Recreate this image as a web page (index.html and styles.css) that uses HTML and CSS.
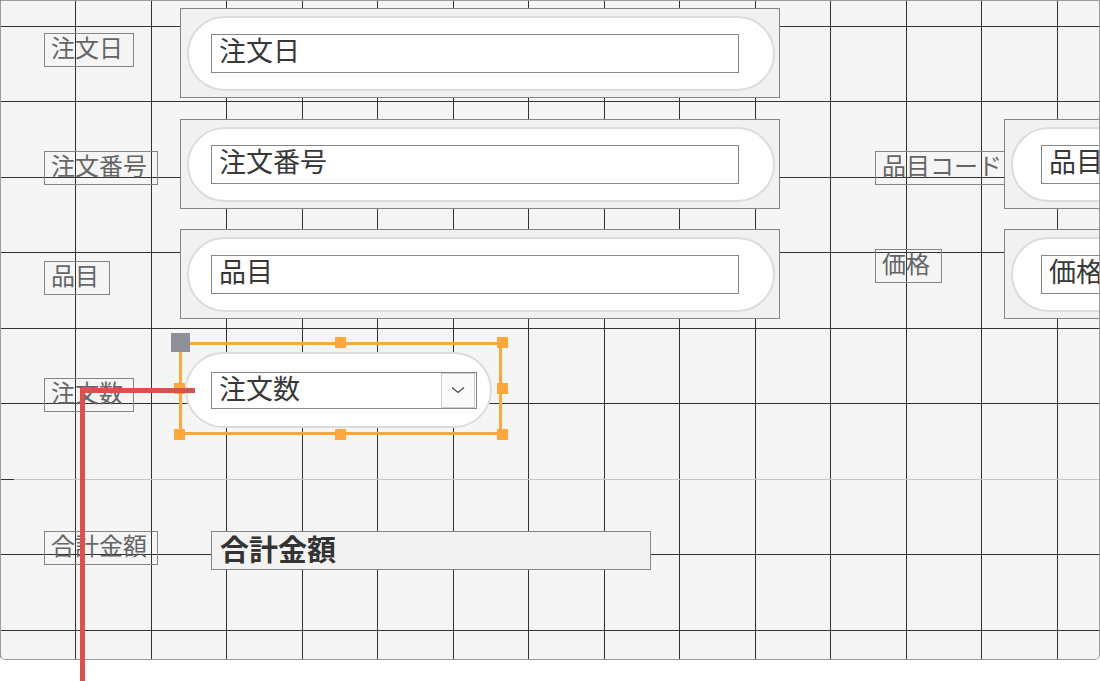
FILE: index.html
```html
<!DOCTYPE html>
<html lang="ja">
<head>
<meta charset="utf-8">
<title>フォーム デザイン</title>
<link rel="stylesheet" href="styles.css">
</head>
<body>
<div class="stage">
  <div class="canvas">
    <div class="section-line"></div>

    <div class="lbl l-date">注文日</div>
    <div class="box c-date"><div class="pill"><div class="field f-wide">注文日</div></div></div>

    <div class="lbl l-no">注文番号</div>
    <div class="box c-no"><div class="pill"><div class="field f-wide">注文番号</div></div></div>

    <div class="lbl l-item">品目</div>
    <div class="box c-item"><div class="pill"><div class="field f-wide">品目</div></div></div>

    <div class="lbl l-code">品目コード</div>
    <div class="box c-code"><div class="pill pill-r"><div class="field f-wide">品目コード</div></div></div>

    <div class="lbl l-price">価格</div>
    <div class="box c-price"><div class="pill pill-r"><div class="field f-wide">価格</div></div></div>

    <div class="lbl l-qty">注文数</div>
    <div class="combo-pill">
      <div class="field combo-field">
        <span class="combo-text">注文数</span>
        <span class="drop">
          <svg width="14" height="8" viewBox="0 0 14 8"><path d="M1 1.5 L7 6.5 L13 1.5" fill="none" stroke="#444" stroke-width="1.2"/></svg>
        </span>
      </div>
    </div>
    <div class="selection">
      <span class="anchor"></span>
      <span class="h h-tm"></span><span class="h h-tr"></span>
      <span class="h h-ml"></span><span class="h h-mr"></span>
      <span class="h h-bl"></span><span class="h h-bm"></span><span class="h h-br"></span>
    </div>

    <div class="lbl l-total">合計金額</div>
    <div class="total">合計金額</div>
  </div>

  <div class="link-h"></div>
  <div class="link-v"></div>
</div>
</body>
</html>
```

FILE: styles.css
```css
html, body {
  margin: 0;
  padding: 0;
  background: #ffffff;
  overflow: hidden;
}

.stage {
  position: relative;
  width: 1100px;
  height: 681px;
  font-family: "Noto Sans CJK JP", "Noto Sans", sans-serif;
}

.canvas {
  position: relative;
  width: 1100px;
  height: 660px;
  background-color: #f5f5f5;
  background-image:
    linear-gradient(to right, #333 0 1px, transparent 1px 76px, #333 76px 77px, transparent 77px),
    linear-gradient(to bottom, #333 0 1px, transparent 1px 75px, #333 75px 76px, transparent 76px);
  background-size: 151px 100%, 100% 151px;
  background-position: 75px 0, 0 26px;
  border-radius: 0 0 5px 5px;
  overflow: hidden;
}

.canvas::after {
  content: "";
  position: absolute;
  inset: 0;
  border: 1px solid #9c9c9c;
  border-radius: 0 0 5px 5px;
  pointer-events: none;
  z-index: 5;
}

.section-line {
  position: absolute;
  left: 14px;
  right: 0;
  top: 479px;
  height: 1px;
  background: #c8c8c8;
}

/* labels */
.lbl {
  position: absolute;
  box-sizing: border-box;
  height: 34px;
  border: 1px solid #858585;
  color: #656565;
  font-size: 24px;
  line-height: 25px;
  padding: 0 0 0 6px;
  white-space: nowrap;
}
.l-date  { left: 44px;  top: 33px;  width: 90px; }
.l-no    { left: 44px;  top: 151px; width: 114px; }
.l-item  { left: 44px;  top: 261px; width: 66px; }
.l-qty   { left: 44px;  top: 378px; width: 90px; }
.l-code  { left: 875px; top: 151px; width: 130px; }
.l-price { left: 875px; top: 249px; width: 67px; }
.l-total { left: 44px;  top: 531px; width: 114px; }

/* text box containers */
.box {
  position: absolute;
  box-sizing: border-box;
  height: 90px;
  width: 600px;
  background: #f1f1f1;
  border: 1px solid #868686;
  padding: 7px 0 0 6px;
}
.c-date  { left: 180px;  top: 8px; }
.c-no    { left: 180px;  top: 119px; }
.c-item  { left: 180px;  top: 229px; }
.c-code  { left: 1004px; top: 119px; }
.c-price { left: 1004px; top: 229px; }

.pill {
  box-sizing: border-box;
  width: 588px;
  height: 75px;
  background: #ffffff;
  border: 2px solid #dcdcdc;
  border-radius: 38px;
  display: flex;
  align-items: center;
  padding-left: 22px;
}
.pill-r {
  padding-left: 28px;
}

.field {
  box-sizing: border-box;
  height: 39px;
  background: #ffffff;
  border: 1px solid #858585;
  color: #383838;
  font-size: 27px;
  line-height: 29px;
  padding-left: 7px;
  white-space: nowrap;
}
.f-wide {
  width: 528px;
}

/* combo box */
.combo-pill {
  position: absolute;
  left: 185px;
  top: 352px;
  box-sizing: border-box;
  width: 307px;
  height: 76px;
  background: #ffffff;
  border: 2px solid #dcdcdc;
  border-radius: 38px;
  display: flex;
  align-items: center;
  padding-left: 24px;
}
.combo-field {
  width: 266px;
  height: 37px;
  display: flex;
  align-items: stretch;
  justify-content: space-between;
  padding-right: 1px;
}
.combo-text {
  display: block;
  line-height: 29px;
}
.drop {
  box-sizing: border-box;
  width: 34px;
  background: #fafafa;
  border: 1px solid #cfcfcf;
  display: flex;
  align-items: center;
  justify-content: center;
}
.drop svg {
  display: block;
}

.selection {
  position: absolute;
  left: 179px;
  top: 342px;
  box-sizing: border-box;
  width: 323px;
  height: 93px;
  border: 3px solid #ffa73d;
  z-index: 2;
}
.h {
  position: absolute;
  width: 11px;
  height: 11px;
  background: #ffa73d;
}
.h-tm { left: 153px; top: -8px; }
.h-tr { left: 315px; top: -8px; }
.h-ml { left: -8px;  top: 38px; }
.h-mr { left: 315px; top: 38px; }
.h-bl { left: -8px;  top: 84px; }
.h-bm { left: 153px; top: 84px; }
.h-br { left: 315px; top: 84px; }
.anchor {
  position: absolute;
  left: -11px;
  top: -12px;
  width: 19px;
  height: 19px;
  background: #8e9198;
}

/* total */
.total {
  position: absolute;
  left: 211px;
  top: 531px;
  box-sizing: border-box;
  width: 440px;
  height: 39px;
  background: #f2f2f2;
  border: 1px solid #858585;
  color: #333333;
  font-size: 29px;
  font-weight: bold;
  line-height: 33px;
  padding-left: 8px;
  white-space: nowrap;
}

/* relationship line */
.link-h {
  position: absolute;
  left: 80px;
  top: 388px;
  width: 115px;
  height: 5px;
  background: #d9524f;
  z-index: 10;
}
.link-v {
  position: absolute;
  left: 80px;
  top: 388px;
  width: 5px;
  height: 293px;
  background: #d9524f;
  z-index: 10;
}
```
